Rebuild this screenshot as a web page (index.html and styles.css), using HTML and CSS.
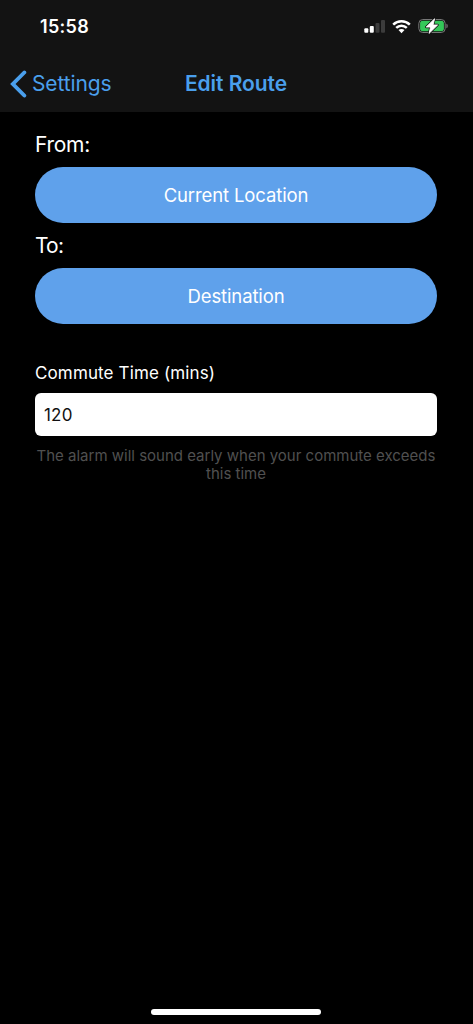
FILE: index.html
```html
<!DOCTYPE html>
<html lang="en">
<head>
<meta charset="utf-8">
<title>Edit Route</title>
<link rel="stylesheet" href="styles.css">
</head>
<body>
<div class="screen">
  <header class="header">
    <div class="status">
      <span class="time">15:58</span>
      <div class="status-icons">
        <svg class="signal" width="22" height="15" viewBox="0 0 22 15">
          <rect x="0.3" y="9.2" width="4" height="4.6" rx="1" fill="#fff"/>
          <rect x="5.8" y="7" width="4" height="6.8" rx="1" fill="#fff"/>
          <rect x="11.5" y="4" width="4" height="9.8" rx="1" fill="#3c3c3c"/>
          <rect x="17" y="1" width="4" height="12.8" rx="1" fill="#3c3c3c"/>
        </svg>
        <svg class="wifi" width="19" height="15" viewBox="0 0 19 15">
          <g fill="none" stroke="#fff" stroke-width="2.5">
            <path d="M1.2 5.7C5.9 1.2 13.1 1.2 17.8 5.7"/>
            <path d="M4.2 8.9C7.2 6 11.8 6 14.8 8.9"/>
          </g>
          <path d="M6.5 11.1C8.2 9.6 10.8 9.6 12.5 11.1L9.5 14.2Z" fill="#fff"/>
        </svg>
        <svg class="battery" width="31" height="18" viewBox="0 0 31 18">
          <rect x="0.8" y="2.5" width="26.4" height="13" rx="4" fill="none" stroke="#777" stroke-width="1"/>
          <rect x="2.1" y="3.8" width="23.8" height="10.4" rx="2.6" fill="#34c759"/>
          <path d="M28.4 6.8C30.2 7.4 30.2 10.7 28.4 11.3Z" fill="#777"/>
          <path d="M16.6 1.8L8.2 10H12.6L11 16.4L19.6 8H15Z" fill="#131313" stroke="#131313" stroke-width="2.4" stroke-linejoin="round"/>
          <path d="M16.6 1.8L8.2 10H12.6L11 16.4L19.6 8H15Z" fill="#fff" stroke="#fff" stroke-width="0.9" stroke-linejoin="round"/>
        </svg>
      </div>
    </div>
    <nav class="nav">
      <div class="back">
        <svg width="18" height="28" viewBox="0 0 18 28"><path d="M14.3 2.5L2.9 14L14.3 25.5" fill="none" stroke="#4a9fec" stroke-width="3.9" stroke-linecap="round" stroke-linejoin="miter"/></svg>
        <span class="back-label">Settings</span>
      </div>
      <h1 class="title">Edit Route</h1>
    </nav>
  </header>
  <main class="form">
    <div class="label">From:</div>
    <button class="pill"><span class="current">Current Location</span></button>
    <div class="label to">To:</div>
    <button class="pill"><span class="destination">Destination</span></button>
    <label class="commute" for="minutes">Commute Time (mins)</label>
    <input class="minutes" id="minutes" type="text" value="120">
    <p class="hint">The alarm will sound early when your commute exceeds<br>this time</p>
  </main>
  <div class="home"></div>
</div>
</body>
</html>
```
FILE: styles.css
```css
* { box-sizing: border-box; }
body { margin: 0; background: #000; font-family: Inter, sans-serif; color: #fff; }
.screen { width: 473px; height: 1024px; display: flex; flex-direction: column; background: #000; overflow: hidden; }
.header { height: 112px; background: #131313; }
.status { height: 55px; padding: 0 24px 2px 40px; display: flex; justify-content: space-between; align-items: center; }
.time { font-size: 18px; font-weight: 600; letter-spacing: 0.3px; }
.status-icons { display: flex; align-items: center; margin-top: -1px; }
.wifi { margin-left: 6px; }
.battery { margin-left: 7px; }
.nav { height: 57px; padding: 0 11px 0 10px; display: grid; grid-template-columns: 1fr auto 1fr; align-items: center; color: #4a9fec; }
.back { display: flex; align-items: center; gap: 4px; }
.back-label { font-size: 21px; letter-spacing: -0.1px; }
.title { margin: 0; font-size: 21px; font-weight: 600; letter-spacing: -0.05px; }
.form { flex: 1; padding: 19px 36px 0 35px; display: flex; flex-direction: column; }
.label { height: 36px; padding-top: 1px; font-size: 21px; line-height: 26px; letter-spacing: -0.3px; }
.to { letter-spacing: -0.8px; }
.pill { height: 56px; margin: 0 0 9px; padding: 0; border: 0; border-radius: 28px; background: #5fa1eb; color: #fff; font-family: inherit; font-size: 18.5px; line-height: 24px; letter-spacing: -0.12px; }
.commute { margin-top: 28px; height: 32px; font-size: 17px; line-height: 24px; letter-spacing: 0.13px; }
.minutes { width: 100%; height: 43px; padding: 0 9px; border: 0; border-radius: 6px; background: #fff; color: #111; font-family: inherit; font-size: 17px; letter-spacing: 0.2px; }
.hint { margin: 11px 0 0; text-align: center; color: #505050; font-size: 15px; line-height: 18px; letter-spacing: 0; white-space: nowrap; }
.home { align-self: center; width: 170px; height: 6px; margin: 0 1px 9px 0; border-radius: 3px; background: #fff; }
```
